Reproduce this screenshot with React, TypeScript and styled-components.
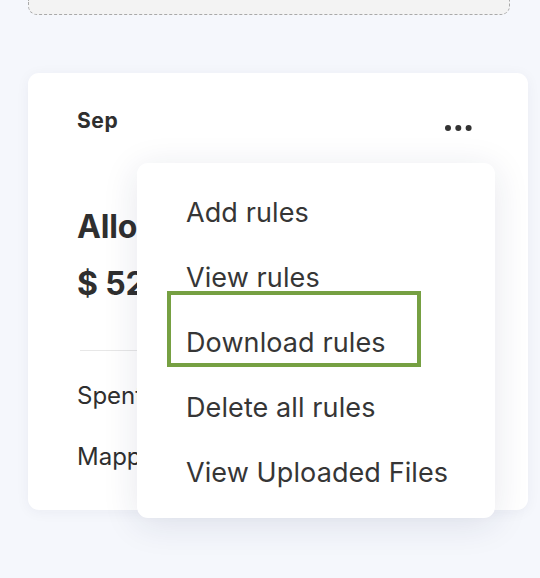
import React from "react";
import styled, { createGlobalStyle } from "styled-components";

const PAGE_BG = "#f5f7fc";
const TEXT_DARK = "#2f2f2f";
const MENU_TEXT = "#363636";
const DASH_GRAY = "#a9a9a9";
const ANNOTATION_GREEN = "#76a042";

const GlobalStyle = createGlobalStyle`
  html, body {
    margin: 0;
    padding: 0;
    background: ${PAGE_BG};
    font-family: Inter, "Noto Sans", "Liberation Sans", sans-serif;
    color: ${TEXT_DARK};
  }
`;

const Page = styled.div`
  display: flex;
  flex-direction: column;
  align-items: flex-start;
  padding: 0 12px 0 28px;
  row-gap: 58px;
  min-height: 578px;
  box-sizing: border-box;
`;

const DropZone = styled.div`
  width: 482px;
  height: 15px;
  box-sizing: border-box;
  background: #f3f3f3;
  border: 1px dashed ${DASH_GRAY};
  border-top: none;
  border-radius: 0 0 9px 9px;
`;

const Card = styled.section`
  position: relative;
  width: 500px;
  height: 437px;
  box-sizing: border-box;
  background: #ffffff;
  border-radius: 11px;
  box-shadow: 0 2px 14px rgba(30, 40, 80, 0.05);
  padding: 36px 55px 0 49px;
  display: flex;
  flex-direction: column;
`;

const CardHeader = styled.div`
  display: flex;
  justify-content: space-between;
  align-items: flex-start;
`;

const MonthLabel = styled.span`
  font-size: 21px;
  line-height: 24px;
  font-weight: 700;
  letter-spacing: 0.6px;
`;

const MoreButton = styled.button`
  border: none;
  background: none;
  padding: 0;
  margin-top: 16px;
  display: flex;
  cursor: pointer;
`;

const BigFigure = styled.div<{ $gap: number }>`
  font-size: 32px;
  line-height: 40px;
  font-weight: 700;
  letter-spacing: -0.2px;
  margin-top: ${({ $gap }) => $gap}px;
  white-space: nowrap;
`;

const Divider = styled.hr`
  border: none;
  height: 1px;
  background: #e7e7e7;
  margin: 46px 0 0 3px;
`;

const StatRow = styled.div<{ $gap: number }>`
  font-size: 24px;
  line-height: 32px;
  margin-top: ${({ $gap }) => $gap}px;
  white-space: nowrap;
`;

const Menu = styled.ul`
  position: absolute;
  left: 109px;
  top: 90px;
  width: 358px;
  height: 355px;
  box-sizing: border-box;
  margin: 0;
  padding: 17px 0 15px;
  list-style: none;
  background: #ffffff;
  border-radius: 11px;
  box-shadow: 0 6px 36px rgba(30, 40, 80, 0.11);
`;

const MenuItem = styled.li<{ $marked?: boolean }>`
  position: relative;
  height: 65px;
  line-height: 65px;
  padding-left: 49px;
  font-size: 27px;
  letter-spacing: 0.1px;
  color: ${MENU_TEXT};
  white-space: nowrap;
  cursor: pointer;

  ${({ $marked }) =>
    $marked &&
    `
    &::after {
      content: "";
      position: absolute;
      left: 30px;
      top: -19px;
      width: 254px;
      height: 76px;
      box-sizing: border-box;
      border: 4.5px solid ${ANNOTATION_GREEN};
      pointer-events: none;
    }
  `}
`;

const DotsIcon = () => (
  <svg width="28" height="6" viewBox="0 0 28 6" aria-hidden="true">
    <circle cx="3" cy="3" r="3" fill="#333" />
    <circle cx="13.3" cy="3" r="3" fill="#333" />
    <circle cx="23.6" cy="3" r="3" fill="#333" />
  </svg>
);

const menuItems = [
  "Add rules",
  "View rules",
  "Download rules",
  "Delete all rules",
  "View Uploaded Files",
];

export default function App() {
  return (
    <>
      <GlobalStyle />
      <Page>
        <DropZone />
        <Card>
          <CardHeader>
            <MonthLabel>Sep</MonthLabel>
            <MoreButton aria-label="More actions">
              <DotsIcon />
            </MoreButton>
          </CardHeader>
          <BigFigure $gap={74}>Allocated</BigFigure>
          <BigFigure $gap={17}>$ 52,000</BigFigure>
          <Divider />
          <StatRow $gap={29}>Spent</StatRow>
          <StatRow $gap={29}>Mapped</StatRow>
          <Menu>
            {menuItems.map((label) => (
              <MenuItem key={label} $marked={label === "Download rules"}>
                {label}
              </MenuItem>
            ))}
          </Menu>
        </Card>
      </Page>
    </>
  );
}
